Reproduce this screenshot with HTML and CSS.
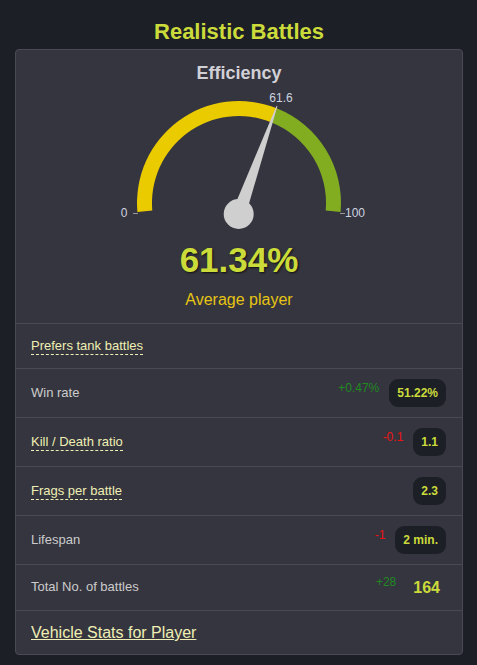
FILE: index.html
```html
<html>
  <head>
    <meta charset="utf-8">
    <meta name="viewport" content="width=device-width, initial-scale=1">
    <title>Realistic Battles</title>
    <link rel="stylesheet" href="styles.css">
  </head>
  <body>
    <h1 class="mode-title">Realistic Battles</h1>

    <div class="stat-card">
      <div class="gauge-box">
        <div class="gauge-title">Efficiency</div>
        <svg class="gauge" width="300" height="150" viewBox="0 0 300 150">
          <path d="M 48.4 127.9 A 102 102 0 0 1 188.3 24.5 L 182.6 38.4 A 87 87 0 0 0 63.3 126.6 Z" fill="#eacb00"/>
          <path d="M 188.3 24.5 A 102 102 0 0 1 251.6 127.9 L 236.7 126.6 A 87 87 0 0 0 182.6 38.4 Z" fill="#82ad21"/>
          <line x1="44" y1="129.5" x2="49" y2="129.5" stroke="#999" stroke-width="1"/>
          <line x1="251" y1="129.5" x2="256" y2="129.5" stroke="#999" stroke-width="1"/>
          <text x="35" y="133" class="gauge-label" text-anchor="middle">0</text>
          <text x="256" y="133" class="gauge-label">100</text>
          <text x="192" y="18" class="gauge-label" text-anchor="middle">61.6</text>
          <polygon points="156.3,132.3 188.4,22.2 187.6,21.8 143.1,127.7" fill="#cfcfcf"/>
          <circle cx="149.7" cy="130" r="15" fill="#cfcfcf"/>
        </svg>
        <div class="score">61.34%</div>
        <div class="rank">Average player</div>
      </div>

      <div class="stat-row">
        <span class="stat-name hint">Prefers tank battles</span>
      </div>
      <div class="stat-row">
        <span class="stat-name">Win rate</span>
        <span class="stat-val">
          <span class="delta up">+0.47%</span>
          <span class="badge">51.22%</span>
        </span>
      </div>
      <div class="stat-row">
        <span class="stat-name hint">Kill / Death ratio</span>
        <span class="stat-val">
          <span class="delta down">-0.1</span>
          <span class="badge">1.1</span>
        </span>
      </div>
      <div class="stat-row">
        <span class="stat-name hint">Frags per battle</span>
        <span class="stat-val">
          <span class="badge">2.3</span>
        </span>
      </div>
      <div class="stat-row">
        <span class="stat-name">Lifespan</span>
        <span class="stat-val">
          <span class="delta down">-1</span>
          <span class="badge">2 min.</span>
        </span>
      </div>
      <div class="stat-row">
        <span class="stat-name">Total No. of battles</span>
        <span class="stat-val">
          <span class="delta up">+28</span>
          <span class="badge plain">164</span>
        </span>
      </div>
      <div class="stat-row link-row">
        <a href="#" class="vehicle-link">Vehicle Stats for Player</a>
      </div>
    </div>
  </body>
</html>
```

FILE: styles.css
```css
body {
  margin: 0;
  padding: 0 14px 0 15px;
  background: #1d1f27;
  font-family: "Liberation Sans", Arial, sans-serif;
  color: #cccccc;
}

h1.mode-title {
  margin: 19px 0 4px;
  font-size: 22px;
  line-height: 26px;
  font-weight: bold;
  text-align: center;
  color: #cbdb3a;
}

.stat-card {
  background: #35353f;
  border: 1px solid #4a4a54;
  border-radius: 4px;
}

/* top part: gauge */
.gauge-box {
  padding: 12px 0 13px;
  text-align: center;
}
.gauge-title {
  font-size: 18px;
  line-height: 22px;
  font-weight: bold;
  color: #d0d0d6;
}
svg.gauge {
  display: block;
  margin: 0 auto;
}
.gauge-label {
  font-family: "Liberation Sans", Arial, sans-serif;
  font-size: 12px;
  fill: #cdd3e0;
}
.score {
  margin-top: 6px;
  font-size: 35px;
  line-height: 40px;
  font-weight: bold;
  color: #cbdb3a;
  text-shadow: 1px 1px 2px #111;
}
.rank {
  margin-top: 10px;
  font-size: 16px;
  line-height: 20px;
  color: #e6c413;
}

/* rows */
.stat-row {
  display: flex;
  justify-content: space-between;
  align-items: center;
  border-top: 1px solid #4a4a54;
  padding: 10px 16px 10px 15px;
  min-height: 24px;
}
.stat-name {
  font-size: 13px;
  line-height: 17px;
  color: #cccccc;
  margin-bottom: 2px;
}
.stat-name.hint {
  color: #efefb4;
  border-bottom: 1px dashed #efefb4;
  margin-bottom: 0;
}
.stat-val {
  display: flex;
  align-items: center;
}
.delta {
  font-size: 12px;
  margin-right: 10px;
  margin-bottom: 11px;
}
.delta.up {
  color: #1f8a1f;
}
.delta.down {
  color: #ec1313;
}
.badge {
  display: inline-block;
  height: 28px;
  line-height: 28px;
  padding: 0 8px;
  border-radius: 9px;
  background: #1d1f27;
  font-size: 12px;
  font-weight: bold;
  color: #cbdb3a;
}
.badge.plain {
  background: none;
  padding: 0 6px;
  height: 24px;
  line-height: 24px;
  font-size: 16px;
}
.delta + .badge.plain {
  margin-left: 1px;
}

.link-row {
  padding-bottom: 9px;
}
a.vehicle-link {
  font-size: 16px;
  line-height: 24px;
  color: #efefb4;
}
```
